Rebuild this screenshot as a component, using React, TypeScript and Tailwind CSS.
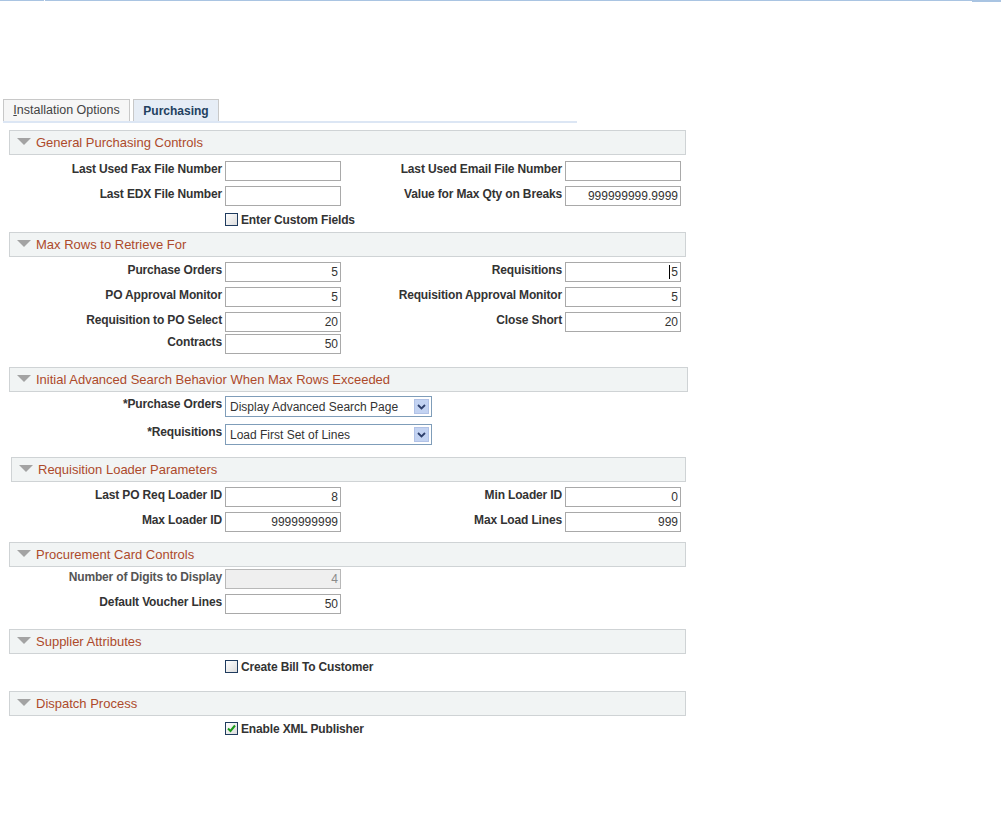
import React from "react"

const font = { fontFamily: '"Liberation Sans", Arial, sans-serif' }

const Header = ({ title, w = "w-[677px]" }: { title: string; w?: string }) => (
    <div className={`${w} h-[25px] bg-[#f1f4f4] border border-[#cfd3d5] flex items-center`}>
        <svg width="14" height="8" viewBox="0 0 14 8" className="ml-[7px] mt-[-2px]">
            <path d="M0 0 L14 0 L7 7 Z" fill="#a3a3a3" />
        </svg>
        <span className="ml-[5px] text-[13px] text-[#ad4a2b]">{title}</span>
    </div>
)

const Field = ({ value = "", disabled, caret }: { value?: string; disabled?: boolean; caret?: boolean }) => (
    <div className={`w-[116px] h-[20px] border ${disabled ? "border-[#b8b8b8] bg-[#efefef] text-[#8a8a8a]" : "border-[#a9a9a9] bg-white text-[#333]"} text-[12px] flex items-center justify-end pr-[2px]`}>
        {caret && <span className="w-px h-[14px] bg-black mr-[1px]" />}
        {value}
    </div>
)

const Label = ({ children, dim }: { children?: React.ReactNode; dim?: boolean }) => (
    <div className={`text-right text-[12px] tracking-[-0.15px] font-bold ${dim ? "text-[#555]" : "text-[#333]"} leading-[14px] pt-[1px]`}>{children}</div>
)

const Row = ({ l, lv, r, rv, ld, h = "h-[25px]" }: { l: string; lv?: React.ReactNode; r?: string; rv?: React.ReactNode; ld?: boolean; h?: string }) => (
    <div className={`grid grid-cols-[213px_116px_218px_116px] gap-x-[3px] ${h} items-start`}>
        <Label dim={ld}>{l}</Label>
        {lv}
        {r ? <Label>{r}</Label> : <div />}
        {rv ?? <div />}
    </div>
)

const Check = ({ label, checked }: { label: string; checked?: boolean }) => (
    <div className="flex items-center pl-[216px] h-[13px]">
        <span className="w-[13px] h-[13px] border border-[#1f3b5e] bg-gradient-to-br from-white to-[#dcdcdc] flex items-center justify-center">
            {checked && (
                <svg width="11" height="11" viewBox="0 0 11 11">
                    <path d="M2 5.5 L4.5 8 L9 2.5" stroke="#1a9a1a" strokeWidth="2" fill="none" />
                </svg>
            )}
        </span>
        <span className="ml-[3px] text-[12px] tracking-[-0.15px] font-bold text-[#333]">{label}</span>
    </div>
)

const Select = ({ value }: { value: string }) => (
    <div className="w-[207px] h-[21px] border border-[#7f9db9] bg-white flex items-center text-[12px] text-[#333]">
        <span className="pl-[4px] grow pt-[1px]">{value}</span>
        <span className="w-[15px] h-[15px] mr-[2px] bg-[#c3d3f2] border border-[#b1c2e6] flex items-center justify-center">
            <svg width="9" height="6" viewBox="0 0 9 6">
                <path d="M1 1 L4.5 4.5 L8 1" stroke="#2d3f6b" strokeWidth="1.8" fill="none" />
            </svg>
        </span>
    </div>
)

export default function App() {
    return (
        <div className="w-[1001px] h-[828px] bg-white" style={font}>
            {/* top strip */}
            <div className="flex h-[3px] items-start">
                <div className="w-[44px] h-px bg-[#a9c4e2]" />
                <div className="w-px" />
                <div className="w-[927px] h-px bg-[#a9c4e2]" />
                <div className="w-[29px] h-[2px] bg-[#a9c4e2]" />
            </div>

            {/* tabs */}
            <div className="mt-[96px] ml-[3px] w-[574px] h-[24px] border-b-2 border-[#dce6f4] flex items-end">
                <div className="w-[127px] h-[22px] border border-b-0 border-[#c8c8c8] bg-[#f6f6f6] text-[12.5px] text-[#444] flex items-center justify-center">
                    <span><span className="underline">I</span>nstallation Options</span>
                </div>
                <div className="ml-[3px] h-[22px] w-[86px] border-l border-r border-t border-[#c8c8c8] bg-[#e6edf6] text-[12px] font-bold text-[#23415f] flex items-center justify-center">
                    Purchasing
                </div>
            </div>

            <div className="pl-[9px] pt-[7px]">
                <Header title="General Purchasing Controls" />
                <div className="pt-[6px]">
                    <Row l="Last Used Fax File Number" lv={<Field />} r="Last Used Email File Number" rv={<Field />} />
                    <Row l="Last EDX File Number" lv={<Field />} r="Value for Max Qty on Breaks" rv={<Field value="999999999.9999" />} />
                    <div className="mt-[2px]"><Check label="Enter Custom Fields" /></div>
                </div>

                <div className="mt-[6px]"><Header title="Max Rows to Retrieve For" /></div>
                <div className="pt-[5px]">
                    <Row l="Purchase Orders" lv={<Field value="5" />} r="Requisitions" rv={<Field value="5" caret />} />
                    <Row l="PO Approval Monitor" lv={<Field value="5" />} r="Requisition Approval Monitor" rv={<Field value="5" />} />
                    <Row h="h-[22px]" l="Requisition to PO Select" lv={<Field value="20" />} r="Close Short" rv={<Field value="20" />} />
                    <Row h="h-[20px]" l="Contracts" lv={<Field value="50" />} />
                </div>

                <div className="mt-[13px]"><Header title="Initial Advanced Search Behavior When Max Rows Exceeded" w="w-[679px]" /></div>
                <div className="pt-[4px]">
                    <div className="grid grid-cols-[213px_207px] gap-x-[3px] h-[28px] items-start">
                        <Label>*Purchase Orders</Label>
                        <Select value="Display Advanced Search Page" />
                    </div>
                    <div className="grid grid-cols-[213px_207px] gap-x-[3px] h-[21px] items-start">
                        <Label>*Requisitions</Label>
                        <Select value="Load First Set of Lines" />
                    </div>
                </div>

                <div className="mt-[12px] ml-[2px]"><Header title="Requisition Loader Parameters" w="w-[675px]" /></div>
                <div className="pt-[5px]">
                    <Row l="Last PO Req Loader ID" lv={<Field value="8" />} r="Min Loader ID" rv={<Field value="0" />} />
                    <Row h="h-[20px]" l="Max Loader ID" lv={<Field value="9999999999" />} r="Max Load Lines" rv={<Field value="999" />} />
                </div>

                <div className="mt-[10px]"><Header title="Procurement Card Controls" /></div>
                <div className="pt-[2px]">
                    <Row l="Number of Digits to Display" lv={<Field value="4" disabled />} ld />
                    <Row h="h-[20px]" l="Default Voucher Lines" lv={<Field value="50" />} />
                </div>

                <div className="mt-[15px]"><Header title="Supplier Attributes" /></div>
                <div className="pt-[6px]"><Check label="Create Bill To Customer" /></div>

                <div className="mt-[18px]"><Header title="Dispatch Process" /></div>
                <div className="pt-[6px]"><Check label="Enable XML Publisher" checked /></div>
            </div>
        </div>
    )
}
